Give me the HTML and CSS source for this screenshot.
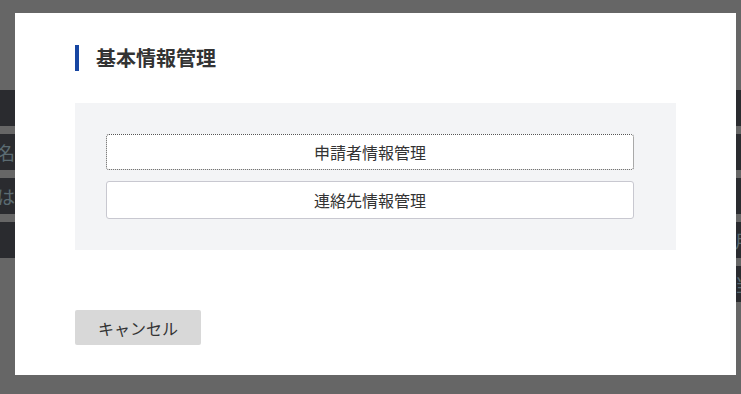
FILE: index.html
```html
<!DOCTYPE html>
<html lang="ja">
<head>
    <meta charset="UTF-8">
    <meta name="viewport" content="width=device-width, initial-scale=1.0">
    <title>基本情報管理</title>
    <link rel="stylesheet" href="styles.css">
</head>
<body>
    <!-- page behind the overlay -->
    <div class="page">
        <div class="row"></div>
        <div class="row"><span class="cell-left">名</span></div>
        <div class="row"><span class="cell-left">は</span></div>
        <div class="row"><span class="cell-right">用</span></div>
        <div class="row row-short"><span class="cell-right">当</span></div>
    </div>

    <div class="overlay">
        <div class="modal">
            <h2 class="modal-title">基本情報管理</h2>
            <div class="menu-panel">
                <button class="menu-btn is-focused">申請者情報管理</button>
                <button class="menu-btn">連絡先情報管理</button>
            </div>
            <div class="modal-footer">
                <button class="cancel-btn">キャンセル</button>
            </div>
        </div>
    </div>
</body>
</html>
```

FILE: styles.css
```css
body {
    margin: 0;
    background-color: #666666;
    font-family: "Noto Sans CJK JP", "Noto Sans", sans-serif;
    color: #333;
}
.page {
    display: flex;
    flex-direction: column;
    gap: 8px;
    padding-top: 90px;
}
.row {
    height: 36px;
    background-color: #2a2b2f;
    display: flex;
    align-items: center;
    font-size: 18px;
    color: #5b6b72;
    overflow: hidden;
}
.row-short {
    margin-left: 400px;
}
.cell-left {
    margin-left: -3px;
}
.cell-right {
    margin-left: auto;
    margin-right: -12px;
}
.overlay {
    position: fixed;
    inset: 0;
}
.modal {
    position: absolute;
    left: 15px;
    top: 13px;
    width: 721px;
    height: 362px;
    box-sizing: border-box;
    background-color: #fff;
    padding: 32px 60px;
}
.modal-title {
    margin: 0;
    height: 26px;
    line-height: 26px;
    border-left: 4px solid #1746a2;
    padding-left: 17px;
    font-size: 20px;
    font-weight: bold;
    color: #333;
}
.menu-panel {
    margin-top: 32px;
    background-color: #f3f4f6;
    padding: 31px 42px 31px 31px;
    display: flex;
    flex-direction: column;
    gap: 11px;
}
.menu-btn {
    height: 38px;
    background-color: #fff;
    border: 1px solid #c8c8d0;
    border-radius: 3px;
    font-family: inherit;
    font-size: 16px;
    color: #333;
    cursor: pointer;
}
.menu-btn.is-focused {
    height: 36px;
    border: 1px dotted #555;
}
.modal-footer {
    margin-top: 60px;
}
.cancel-btn {
    width: 126px;
    height: 35px;
    background-color: #d8d8d8;
    border: none;
    border-radius: 2px;
    font-family: inherit;
    font-size: 16px;
    color: #333;
}
```
